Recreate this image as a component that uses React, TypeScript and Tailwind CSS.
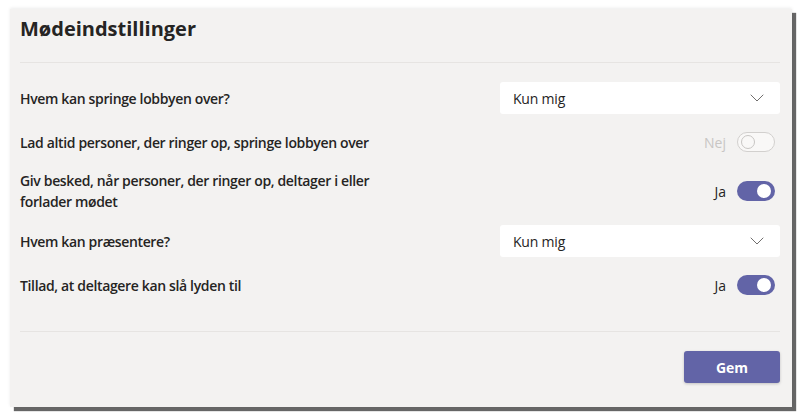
import { ChevronDown } from "lucide-react";

const font = { fontFamily: '"Open Sans", "Noto Sans", sans-serif' };

const Dropdown = ({ value }: { value: string }) => (
  <div className="flex h-[32px] w-[280px] items-center justify-between rounded-[3px] bg-white pl-[13px] pr-[11px] text-[14px] text-[#252423]">
    <span className="tracking-[-0.2px]">{value}</span>
    <ChevronDown size={24} strokeWidth={0.9} className="text-[#605e5c]" />
  </div>
);

const Toggle = ({ on, label }: { on: boolean; label: string }) => (
  <div className="mr-[5px] flex items-center gap-[11px]">
    <span className={on ? "text-[14px] text-[#252423]" : "text-[14px] text-[#c8c6c4]"}>{label}</span>
    {on ? (
      <div className="flex h-[20px] w-[38px] items-center justify-end rounded-full bg-[#6264a7] pr-[4px]">
        <div className="h-[14px] w-[14px] rounded-full bg-white" />
      </div>
    ) : (
      <div className="flex h-[20px] w-[38px] items-center rounded-full border border-[#d2d0ce] bg-[#f9f8f7] pl-[3px]">
        <div className="h-[14px] w-[14px] rounded-full border border-[#c8c6c4]" />
      </div>
    )}
  </div>
);

const Row = ({ label, children, className }: { label: React.ReactNode; children: React.ReactNode; className: string }) => (
  <div className={`flex items-center justify-between ${className}`}>
    <div className="w-[380px] text-[14px] font-semibold leading-[21px] tracking-[-0.35px] text-[#252423]">
      {label}
    </div>
    <div className="flex justify-end">{children}</div>
  </div>
);

export default function App() {
  return (
    <div className="min-h-[419px] w-[803px] bg-white pl-[10px] pt-[9px]" style={font}>
      <div className="flex h-[398px] w-[782px] flex-col bg-[#f3f2f1] px-[10px] pr-[12px] shadow-[4px_4px_1px_rgba(0,0,0,0.6),0_-1px_3px_rgba(0,0,0,0.08)]">
        <h1 className="mt-[6px] text-[20px] font-bold leading-[28px] text-[#252423]">Mødeindstillinger</h1>
        <div className="mt-[19px] h-px bg-[#e6e4e2]" />

        <Row label="Hvem kan springe lobbyen over?" className="mt-[19px] h-[32px]">
          <Dropdown value="Kun mig" />
        </Row>
        <Row label="Lad altid personer, der ringer op, springe lobbyen over" className="mt-[18px] h-[20px]">
          <Toggle on={false} label="Nej" />
        </Row>
        <Row
          label={
            <>
              Giv besked, når personer, der ringer op, deltager i eller
              <br />
              forlader mødet
            </>
          }
          className="mt-[18px] h-[42px]"
        >
          <Toggle on label="Ja" />
        </Row>
        <Row label="Hvem kan præsentere?" className="mt-[13px] h-[32px]">
          <Dropdown value="Kun mig" />
        </Row>
        <Row label="Tillad, at deltagere kan slå lyden til" className="mt-[18px] h-[20px]">
          <Toggle on label="Ja" />
        </Row>

        <div className="mt-[36px] h-px bg-[#e6e4e2]" />
        <div className="mt-[19px] flex justify-end">
          <button className="h-[32px] w-[96px] rounded-[3px] bg-[#6264a7] text-[14px] font-bold text-white shadow-[0_1px_3px_rgba(0,0,0,0.2)]">
            Gem
          </button>
        </div>
      </div>
    </div>
  );
}
